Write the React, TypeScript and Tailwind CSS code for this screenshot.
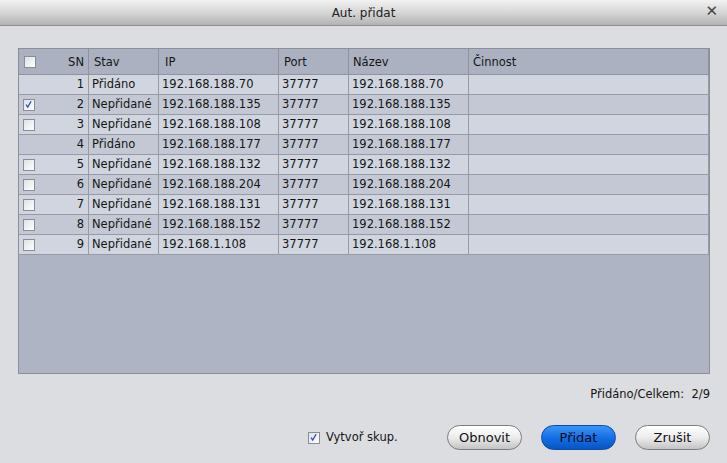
import React from "react";

type Row = { sn: number; added: boolean; checked: boolean; ip: string };

const rows: Row[] = [
  { sn: 1, added: true, checked: false, ip: "192.168.188.70" },
  { sn: 2, added: false, checked: true, ip: "192.168.188.135" },
  { sn: 3, added: false, checked: false, ip: "192.168.188.108" },
  { sn: 4, added: true, checked: false, ip: "192.168.188.177" },
  { sn: 5, added: false, checked: false, ip: "192.168.188.132" },
  { sn: 6, added: false, checked: false, ip: "192.168.188.204" },
  { sn: 7, added: false, checked: false, ip: "192.168.188.131" },
  { sn: 8, added: false, checked: false, ip: "192.168.188.152" },
  { sn: 9, added: false, checked: false, ip: "192.168.1.108" },
];

const cols = "grid grid-cols-[70px_70px_120px_70px_120px_240px]";

function Check({ checked }: { checked?: boolean }) {
  return (
    <span className="relative inline-block w-[12px] h-[12px] border border-[#8a8d94] bg-gradient-to-br from-[#dfe1e6] to-white">
      {checked && (
        <svg viewBox="0 0 12 12" className="absolute inset-0 w-[10px] h-[10px]">
          <path d="M2.5 5.5 L4.5 8.5 L8.5 1.5" fill="none" stroke="#2c4ea8" strokeWidth="1.6" />
        </svg>
      )}
    </span>
  );
}

function Btn({ label, primary }: { label: string; primary?: boolean }) {
  return (
    <button
      className={
        primary
          ? "w-[75px] h-[25px] rounded-full border border-[#0a4aa8] bg-gradient-to-b from-[#3d94f5] via-[#1570e6] to-[#0755c2] text-[13px] text-[#0a0a1a]"
          : "w-[75px] h-[25px] rounded-full border border-[#7c7c7c] bg-gradient-to-b from-white via-[#ececec] to-[#c4c4c4] text-[13px] text-[#111]"
      }
    >
      {label}
    </button>
  );
}

export default function App() {
  return (
    <div className="w-[727px] h-[463px] bg-[#dcdde1] flex flex-col font-['DejaVu_Sans',sans-serif] text-[11.5px] text-[#151515] overflow-hidden">
      {/* Title bar */}
      <div className="h-[26px] shrink-0 relative flex items-center justify-center bg-gradient-to-b from-[#f2f2f2] via-[#d6d6d6] to-[#b3b3b3] border-b border-[#8e8e8e]">
        <span className="text-[12px] text-[#222]">Aut. přidat</span>
        <span className="absolute right-[9px] top-[4px] text-[15px] text-[#444] leading-none">✕</span>
      </div>

      {/* Table */}
      <div className="mt-[22px] ml-[18px] w-[692px] h-[326px] border border-[#8b8f98] bg-[#aeb4c4] flex flex-col">
        <div className={`${cols} h-[26px] bg-[#abb1c1] border-b border-[#8f939c]`}>
          <div className="flex items-center justify-between pl-[5px] pr-[4px] border-r border-[#8f939c]">
            <Check />
            <span className="pt-[2px]">SN</span>
          </div>
          <div className="flex items-center pt-[2px] pl-[5px] border-r border-[#8f939c]">Stav</div>
          <div className="flex items-center pt-[2px] pl-[6px] border-r border-[#8f939c]">IP</div>
          <div className="flex items-center pt-[2px] pl-[5px] border-r border-[#8f939c]">Port</div>
          <div className="flex items-center pt-[2px] pl-[4px] border-r border-[#8f939c]">Název</div>
          <div className="flex items-center pt-[2px] pl-[4px] border-r border-[#8f939c]">Činnost</div>
        </div>
        {rows.map((r, i) => (
          <div
            key={r.sn}
            className={`${cols} h-[20px] border-b border-[#979ba6] ${i % 2 === 0 ? "bg-[#d0d5e0]" : "bg-[#c3c8d4]"}`}
          >
            <div className="flex items-center justify-between pl-[4px] pr-[4px] border-r border-[#979ba6]">
              {r.added ? <span /> : <Check checked={r.checked} />}
              <span>{r.sn}</span>
            </div>
            <div className="flex items-center pl-[3px] border-r border-[#979ba6]">{r.added ? "Přidáno" : "Nepřidané"}</div>
            <div className="flex items-center pl-[3px] border-r border-[#979ba6]">{r.ip}</div>
            <div className="flex items-center pl-[3px] border-r border-[#979ba6]">37777</div>
            <div className="flex items-center pl-[3px] border-r border-[#979ba6]">{r.ip}</div>
            <div className="border-r border-[#979ba6]" />
          </div>
        ))}
      </div>

      {/* Footer */}
      <div className="w-[710px] flex justify-end mt-[12px]">
        <span>Přidáno/Celkem:&nbsp; 2/9</span>
      </div>
      <div className="w-[710px] flex items-center mt-[22px]">
        <div className="ml-[308px] flex items-center">
          <Check checked />
          <span className="ml-[6px]">Vytvoř skup.</span>
        </div>
        <div className="ml-auto flex gap-[19px]">
          <Btn label="Obnovit" />
          <Btn label="Přidat" primary />
          <Btn label="Zrušit" />
        </div>
      </div>
    </div>
  );
}
